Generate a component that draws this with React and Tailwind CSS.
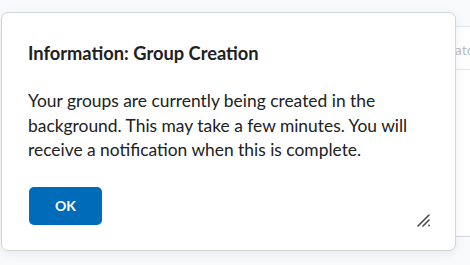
export default function App() {
  return (
    <div className="relative h-[265px] w-[470px] overflow-hidden bg-[#f9fafb] font-['Lato','Liberation_Sans',sans-serif] text-[#202122]">
      {/* Page behind the dialog */}
      <div className="flex flex-col pt-[26px] pl-[360px]">
        <div className="h-[44px] whitespace-nowrap border-y border-[#e3e6e9] bg-white pl-[82px] pt-[12px] text-[14px] text-[#b8bcc0]">
          Match
        </div>
        <div className="h-[166px] bg-white" />
        <div className="border-t border-[#d3d9e3]" />
      </div>

      {/* Dialog */}
      <div className="absolute left-[1px] top-[12px] flex h-[239px] w-[455px] flex-col rounded-[7px] border border-[#cdd5dc] bg-white shadow-[0_3px_12px_rgba(0,0,0,0.07)]">
        <div className="pl-[26px] pr-[20px] pt-[29px]">
          <h2 className="text-[18.3px] font-bold leading-[22px] text-[#202122]">
            Information: Group Creation
          </h2>
          <p className="mt-[25px] text-[17.4px] leading-[24.5px] text-[#202122]">
            Your groups are currently being created in the background. This may take a few minutes. You will receive a notification when this is complete.
          </p>
        </div>
        <div className="flex items-end justify-between pl-[27px] pr-[24px] pt-[24px]">
          <button className="h-[38px] w-[73px] rounded-[5px] bg-[#006bb8] text-[14px] font-bold text-white">
            OK
          </button>
          <svg width="14" height="14" viewBox="0 0 14 14" className="mb-[-2px] text-[#494c4e]">
            <path d="M1 13 12 2" stroke="currentColor" strokeWidth="1.6" strokeLinecap="round" />
            <path d="M6 13 12 7" stroke="currentColor" strokeWidth="1.6" strokeLinecap="round" />
            <circle cx="12" cy="12.5" r="0.9" fill="currentColor" />
          </svg>
        </div>
      </div>
    </div>
  )
}
